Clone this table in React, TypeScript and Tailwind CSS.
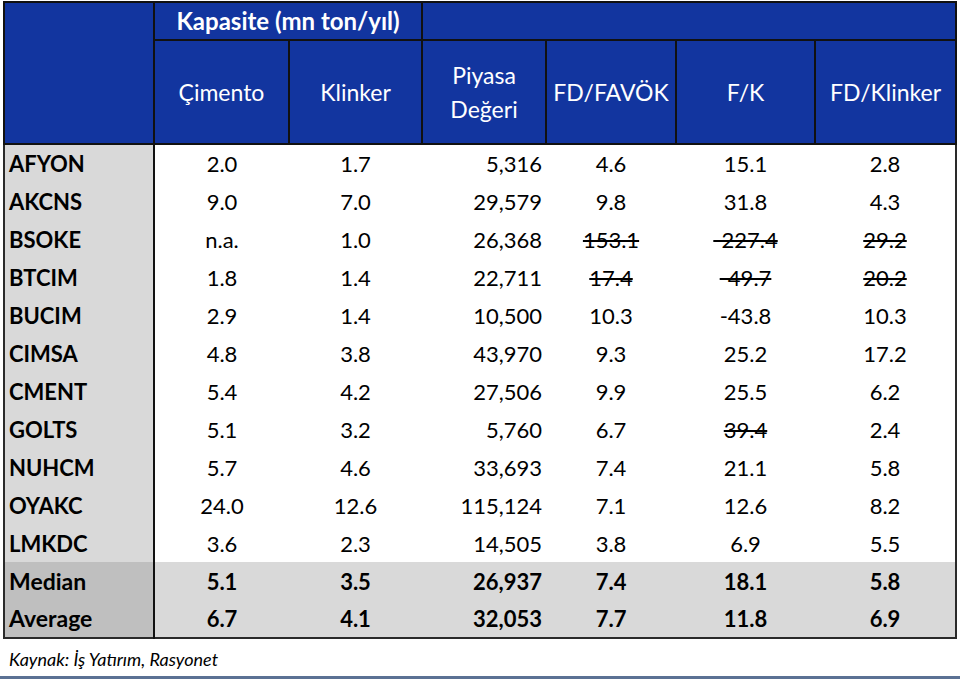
const rows: { code: string; cells: string[]; strike?: number[] }[] = [
  { code: "AFYON", cells: ["2.0", "1.7", "5,316", "4.6", "15.1", "2.8"] },
  { code: "AKCNS", cells: ["9.0", "7.0", "29,579", "9.8", "31.8", "4.3"] },
  { code: "BSOKE", cells: ["n.a.", "1.0", "26,368", "153.1", "-227.4", "29.2"], strike: [3, 4, 5] },
  { code: "BTCIM", cells: ["1.8", "1.4", "22,711", "17.4", "-49.7", "20.2"], strike: [3, 4, 5] },
  { code: "BUCIM", cells: ["2.9", "1.4", "10,500", "10.3", "-43.8", "10.3"] },
  { code: "CIMSA", cells: ["4.8", "3.8", "43,970", "9.3", "25.2", "17.2"] },
  { code: "CMENT", cells: ["5.4", "4.2", "27,506", "9.9", "25.5", "6.2"] },
  { code: "GOLTS", cells: ["5.1", "3.2", "5,760", "6.7", "39.4", "2.4"], strike: [4] },
  { code: "NUHCM", cells: ["5.7", "4.6", "33,693", "7.4", "21.1", "5.8"] },
  { code: "OYAKC", cells: ["24.0", "12.6", "115,124", "7.1", "12.6", "8.2"] },
  { code: "LMKDC", cells: ["3.6", "2.3", "14,505", "3.8", "6.9", "5.5"] },
];

const summary = [
  { code: "Median", cells: ["5.1", "3.5", "26,937", "7.4", "18.1", "5.8"] },
  { code: "Average", cells: ["6.7", "4.1", "32,053", "7.7", "11.8", "6.9"] },
];

const cellAlign = (i: number) => (i === 2 ? "text-right pr-1" : "text-center");

const App = () => {
  return (
    <div className="w-[960px] h-[679px] bg-white font-['Lato','Liberation_Sans',sans-serif] text-black flex flex-col">
      <div className="px-[3px] pt-px">
        <table className="w-full table-fixed border-collapse border-2 border-[#2a2a2a]">
          <colgroup>
            <col className="w-[150px]" />
            <col className="w-[135px]" />
            <col className="w-[133px]" />
            <col className="w-[124px]" />
            <col className="w-[130px]" />
            <col className="w-[139px]" />
            <col />
          </colgroup>
          <thead className="bg-[#12359f] text-white">
            <tr className="h-[38px]">
              <th rowSpan={2} className="border-2 border-[#111]" />
              <th colSpan={2} className="border-2 border-[#111] text-[24px] font-bold leading-none">
                Kapasite (mn ton/yıl)
              </th>
              <th colSpan={4} className="border-2 border-[#111]" />
            </tr>
            <tr className="h-[104px] text-[23px] font-normal">
              <th className="border-2 border-[#111] font-normal">Çimento</th>
              <th className="border-2 border-[#111] font-normal">Klinker</th>
              <th className="border-2 border-[#111] font-normal leading-[34px]">
                Piyasa
                <br />
                Değeri
              </th>
              <th className="border-2 border-[#111] font-normal">FD/FAVÖK</th>
              <th className="border-2 border-[#111] font-normal">F/K</th>
              <th className="border-2 border-[#111] font-normal">FD/Klinker</th>
            </tr>
          </thead>
          <tbody className="text-[22px]">
            {rows.map((row) => (
              <tr key={row.code} className="h-[38px]">
                <td className="bg-[#d9d9d9] border-r-2 border-[#111] pl-1 font-bold">{row.code}</td>
                {row.cells.map((value, i) => (
                  <td
                    key={i}
                    className={`${cellAlign(i)} ${row.strike?.includes(i) ? "line-through" : ""}`}
                  >
                    {value}
                  </td>
                ))}
              </tr>
            ))}
            {summary.map((row) => (
              <tr key={row.code} className="h-[38px] bg-[#d9d9d9] font-bold">
                <td className="bg-[#bfbfbf] border-r-2 border-[#111] pl-1 text-[23px]">{row.code}</td>
                {row.cells.map((value, i) => (
                  <td key={i} className={cellAlign(i)}>
                    {value}
                  </td>
                ))}
              </tr>
            ))}
          </tbody>
        </table>
      </div>
      <div className="flex-1 flex items-center pl-[9px] pt-1 text-[18px] italic">
        Kaynak: İş Yatırım, Rasyonet
      </div>
      <div className="h-[3px] bg-[#5b7194]" />
    </div>
  );
};

export default App;
